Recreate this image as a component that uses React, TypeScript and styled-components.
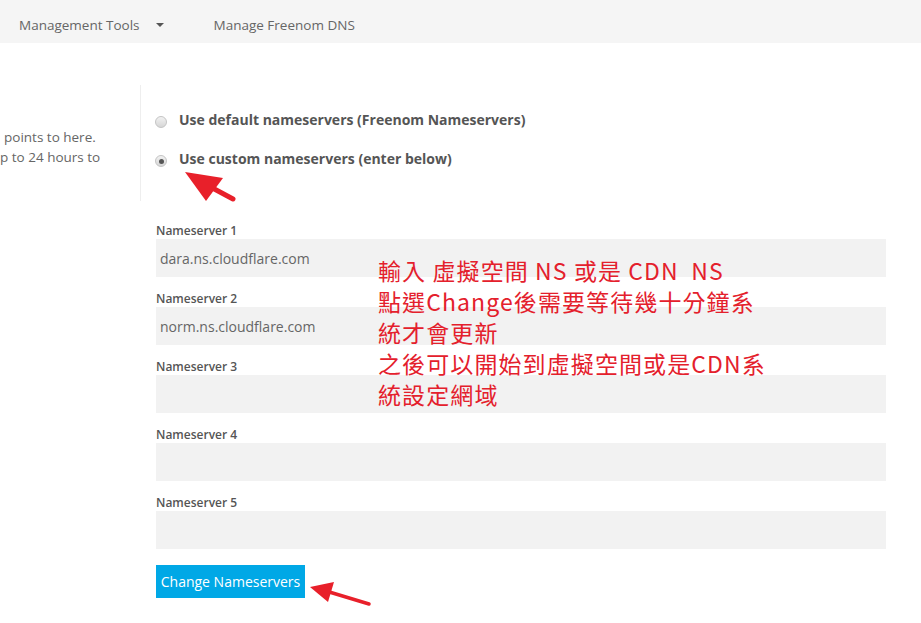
import React from "react";
import styled, { createGlobalStyle } from "styled-components";

const Global = createGlobalStyle`
  html, body { margin: 0; padding: 0; background: #fff; }
  body { font-family: "Open Sans", "Noto Sans", Arial, sans-serif; color: #666; }
  * { box-sizing: border-box; }
`;

const Page = styled.div`
  position: relative;
  width: 921px;
  height: 623px;
  overflow: hidden;
  background: #fff;
`;

const TopBar = styled.nav`
  height: 43px;
  background: #f5f5f5;
  display: flex;
  align-items: center;
  padding-left: 19px;
  padding-top: 7px;
`;

const NavItem = styled.div<{ $gap?: number }>`
  display: flex;
  align-items: center;
  font-size: 13.5px;
  color: #666;
  margin-right: ${(p) => p.$gap ?? 0}px;
  line-height: 20px;
`;

const Caret = styled.span`
  display: inline-block;
  width: 0;
  height: 0;
  margin-left: 16px;
  border-left: 4px solid transparent;
  border-right: 4px solid transparent;
  border-top: 4px solid #555;
`;

const Main = styled.main`
  display: flex;
  flex-direction: column;
`;

const TopRow = styled.div`
  display: flex;
  margin-top: 42px;
  height: 116px;
`;

const Info = styled.div`
  width: 141px;
  border-right: 1px solid #eee;
  padding-top: 42px;
  font-size: 13.5px;
  line-height: 20px;
  color: #666;
  white-space: nowrap;
  overflow: hidden;
`;

const InfoLine = styled.div<{ $indent: number }>`
  padding-left: ${(p) => p.$indent}px;
`;

const Options = styled.div`
  padding-left: 14px;
  padding-top: 25px;
  display: flex;
  flex-direction: column;
  gap: 19px;
`;

const Option = styled.label`
  display: flex;
  align-items: center;
  gap: 12px;
  font-size: 14px;
  font-weight: 700;
  color: #555;
  line-height: 20px;
`;

const Radio = styled.span<{ $checked?: boolean }>`
  position: relative;
  display: inline-block;
  width: 12px;
  height: 12px;
  margin-top: 4px;
  border-radius: 50%;
  border: 1px solid #c4c4c4;
  background: linear-gradient(#f2f2f2, #d6d6d6);
  &::after {
    content: "";
    display: ${(p) => (p.$checked ? "block" : "none")};
    position: absolute;
    left: 2.5px;
    top: 2.5px;
    width: 5px;
    height: 5px;
    border-radius: 50%;
    background: #555;
  }
`;

const Fields = styled.form`
  margin-left: 156px;
  width: 730px;
  padding-top: 21px;
  display: flex;
  flex-direction: column;
`;

const Field = styled.div`
  display: flex;
  flex-direction: column;
  margin-bottom: 13px;
`;

const Label = styled.label`
  font-size: 12px;
  font-weight: 600;
  line-height: 17px;
  color: #555;
`;

const Input = styled.div`
  height: 38px;
  background: #f2f2f2;
  font-size: 14px;
  color: #666;
  padding-left: 4px;
  display: flex;
  align-items: center;
`;

const Button = styled.button`
  margin-top: 3px;
  align-self: flex-start;
  height: 33px;
  width: 149px;
  border: none;
  background: #00a8e6;
  color: #fff;
  font-family: "Open Sans", "Noto Sans", Arial, sans-serif;
  font-size: 14px;
  padding: 0;
`;

const Note = styled.div`
  position: absolute;
  left: 378px;
  top: 255px;
  font-family: "Noto Sans CJK TC", "Noto Sans", sans-serif;
  font-size: 23px;
  letter-spacing: 1.1px;
  line-height: 31px;
  color: #e4202c;
  white-space: nowrap;
`;

const Arrow = styled.svg`
  position: absolute;
  left: 0;
  top: 0;
  pointer-events: none;
`;

const servers = [
  "dara.ns.cloudflare.com",
  "norm.ns.cloudflare.com",
  "",
  "",
  "",
];

export default function App() {
  return (
    <Page>
      <Global />
      <TopBar>
        <NavItem $gap={50}>
          Management Tools
          <Caret />
        </NavItem>
        <NavItem>Manage Freenom DNS</NavItem>
      </TopBar>
      <Main>
        <TopRow>
          <Info>
            <InfoLine $indent={4}>points to here.</InfoLine>
            <InfoLine $indent={0}>p to 24 hours to</InfoLine>
          </Info>
          <Options>
            <Option>
              <Radio />
              Use default nameservers (Freenom Nameservers)
            </Option>
            <Option>
              <Radio $checked />
              Use custom nameservers (enter below)
            </Option>
          </Options>
        </TopRow>
        <Fields>
          {servers.map((s, i) => (
            <Field key={i}>
              <Label>Nameserver {i + 1}</Label>
              <Input>{s}</Input>
            </Field>
          ))}
          <Button type="button">Change Nameservers</Button>
        </Fields>
      </Main>
      <Note>
        <div>輸入 虛擬空間 NS 或是 CDN&nbsp; NS</div>
        <div>點選Change後需要等待幾十分鐘系</div>
        <div>統才會更新</div>
        <div>之後可以開始到虛擬空間或是CDN系</div>
        <div>統設定網域</div>
      </Note>
      <Arrow width="921" height="623" viewBox="0 0 921 623">
        <line x1="233" y1="199" x2="205" y2="184" stroke="#e8202a" strokeWidth="5" strokeLinecap="round" />
        <polygon points="185,172 223,178 206,201" fill="#e8202a" />
        <line x1="369" y1="604" x2="326" y2="591" stroke="#e8202a" strokeWidth="3.5" strokeLinecap="round" />
        <polygon points="310,587 334,582 328,602" fill="#e8202a" />
      </Arrow>
    </Page>
  );
}
